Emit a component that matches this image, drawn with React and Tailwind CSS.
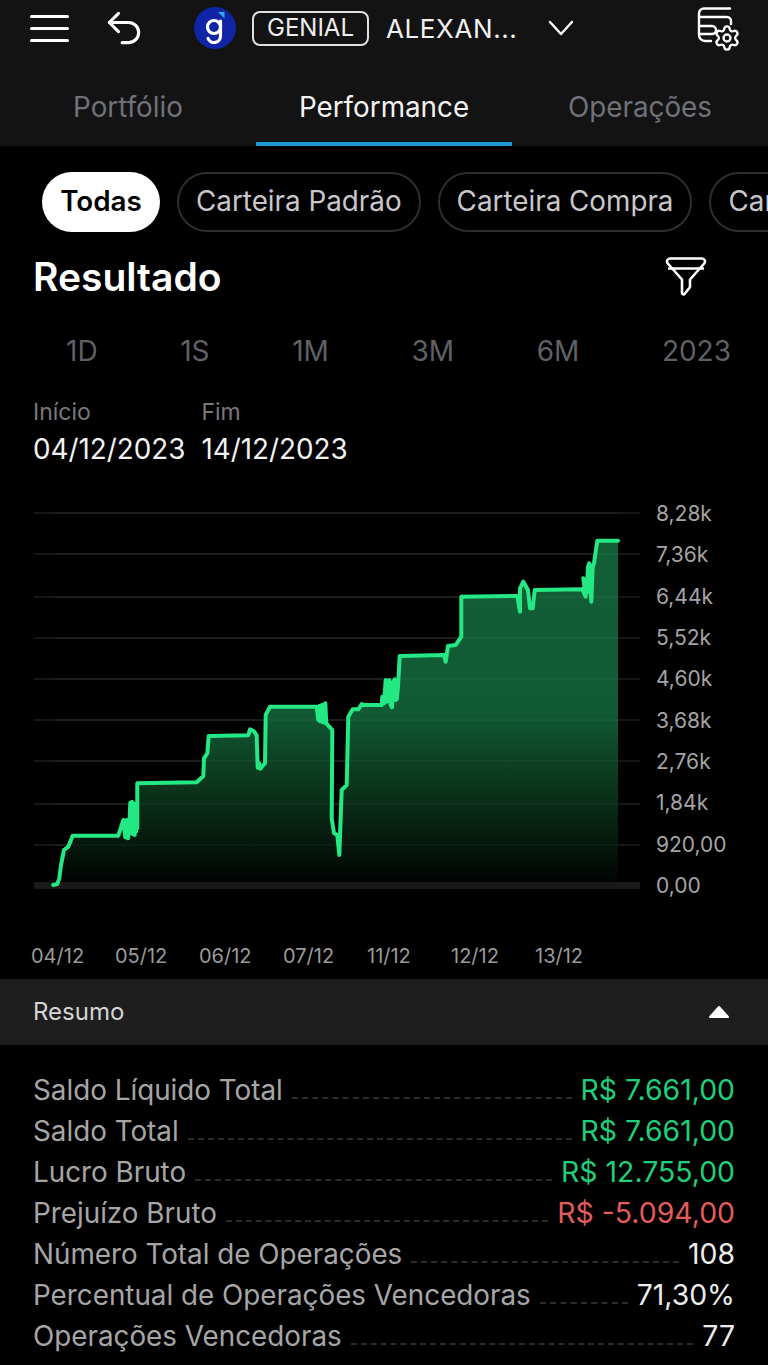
import { Settings, Undo2 } from 'lucide-react'

const FONT = 'font-["Inter",sans-serif]'

// pontos lidos do grafico, em coordenadas da pagina (svg comeca em y=500)
const pts1 = [
  [160,1155],[172,1152],[178,1135],[183,1095],[192,1050],[205,1040],[218,1007],[355,1007],[370,960],[376,1012],[380,960],[384,1015],
  [388,985],[391,908],[394,1000],[396,905],[399,1003],[401,910],[404,1005],[406,915],[408,995],[410,925],[412,985],[412,850],
  [590,847],[610,828],[612,775],[622,760],[626,708],
  [745,706],[750,688],[762,694],[770,706],[773,803],[778,790],[781,806],[795,790],[797,645],[810,620],[950,620],[955,660],
  [958,618],[961,664],[964,616],[967,666],[970,614],[973,668],[976,610],[979,670],
  [997,690],[995,955],[1002,1000],[1012,1005],[1018,1065],[1025,870],[1040,855],[1045,650],[1058,628],[1075,628],
  [1085,612],[1090,615],[1145,615],
].map(([x, y]) => [x / 3, y / 3])
const pts2 = [
  [-5,590],[0,610],[5,540],[9,605],[12,545],[16,540],[20,615],[24,622],[28,545],[32,538],[35,600],[38,598],[42,560],[47,468],
  [180,465],[185,485],[192,438],[215,435],[232,410],
  [232,290],[400,288],[408,335],[408,265],[418,245],[432,270],[438,325],[446,325],[452,270],[595,268],[605,290],[598,235],
  [608,280],[612,200],[616,190],[622,305],[626,200],[630,190],[640,122],[702,122],
].map(([x, y]) => [384 + x / 3, y / 3])
const pts = [...pts1, ...pts2]
const linePath = 'M' + pts.map(([x, y]) => `${x.toFixed(1)} ${y.toFixed(1)}`).join('L')
const areaPath = `${linePath}L618 382L54 382Z`

const gridY = [13, 54, 97, 138, 179, 220, 261, 304, 345]
const yLabels = ['8,28k', '7,36k', '6,44k', '5,52k', '4,60k', '3,68k', '2,76k', '1,84k', '920,00', '0,00']
const xLabels = ['04/12', '05/12', '06/12', '07/12', '11/12', '12/12', '13/12']
const periods = ['1D', '1S', '1M', '3M', '6M', '2023']

const GREEN = 'text-[#1fd07a]'
const resumo = [
  ['Saldo Líquido Total', 'R$ 7.661,00', GREEN],
  ['Saldo Total', 'R$ 7.661,00', GREEN],
  ['Lucro Bruto', 'R$ 12.755,00', GREEN],
  ['Prejuízo Bruto', 'R$ -5.094,00', 'text-[#e25c5c]'],
  ['Número Total de Operações', '108', 'text-[#ececec]'],
  ['Percentual de Operações Vencedoras', '71,30%', 'text-[#ececec]'],
  ['Operações Vencedoras', '77', 'text-[#ececec]'],
  ['Operações Perdedoras', '31', 'text-[#ececec]'],
]

const Grafico = () => (
  <svg width="640" height="400" viewBox="0 0 640 400" className="shrink-0">
    <defs>
      <linearGradient id="area" gradientUnits="userSpaceOnUse" x1="0" y1="40" x2="0" y2="382">
        <stop offset="0" stopColor="#125f37" />
        <stop offset="0.5" stopColor="#115a34" />
        <stop offset="0.75" stopColor="#0a3019" />
        <stop offset="1" stopColor="#010402" />
      </linearGradient>
    </defs>
    {gridY.map(y => (
      <line key={y} x1="34" x2="640" y1={y} y2={y} stroke="#161616" strokeWidth="2" />
    ))}
    <line x1="34" x2="640" y1="385.5" y2="385.5" stroke="#1a1a1a" strokeWidth="7" />
    <path d={areaPath} fill="url(#area)" />
    {gridY.map(y => (
      <line key={y} x1="54" x2="618" y1={y} y2={y} stroke="#fff" strokeOpacity="0.03" strokeWidth="2" />
    ))}
    <path d={linePath} fill="none" stroke="#24e884" strokeWidth="4" strokeLinejoin="round" strokeLinecap="round" />
  </svg>
)

const Logo = () => (
  <svg width="42" height="42" viewBox="0 0 42 42" fill="none" className="ml-[48px] shrink-0">
    <circle cx="21" cy="21" r="21" fill="#0f25a6" />
    <circle cx="20" cy="20" r="6.5" stroke="#fff" strokeWidth="3.2" />
    <path d="M26.5 14V29a6.5 6.5 0 0 1-12.5 2.5" stroke="#fff" strokeWidth="3.2" strokeLinecap="round" />
    <path d="M24 5h6.5v6.5z" fill="#2fa8e6" />
  </svg>
)

const IconeConfig = () => (
  <svg width="46" height="52" viewBox="0 0 46 52" fill="none" stroke="#fff" strokeWidth="2.4" strokeLinecap="round" className="ml-auto mr-[26px] shrink-0">
    <path d="M34 6.5H8a5 5 0 0 0-5 5V33a6 6 0 0 0 6 6h6" />
    <path d="M4 15H31a4 4 0 0 1 4 4v3" />
    <path d="M4 24h12a4 4 0 0 1 0 8H4" />
    <Settings x="17" y="22" width="28" height="28" strokeWidth="2" />
  </svg>
)

const IconeFiltro = () => (
  <svg width="42" height="42" viewBox="0 0 42 42" fill="none" stroke="#fff" strokeWidth="2.6" strokeLinejoin="round">
    <path d="M5 2.5H37a3 3 0 0 1 2.2 5L25 23.5V31l-5 6.5a1.6 1.6 0 0 1-3-1V23.5L2.8 7.5A3 3 0 0 1 5 2.5Z" />
    <path d="M3 12.5H39" />
  </svg>
)

export default function App() {
  return (
    <div className={`w-[768px] h-[1365px] overflow-hidden bg-black text-white ${FONT}`}>

      {/* TOPO */}
      <div className="bg-[#131313] h-[146px] flex flex-col">
        <div className="h-[56px] flex items-center">
          <div className="ml-[30px] w-[39px] flex flex-col gap-[9px]">
            <div className="h-[3px] rounded-full bg-white" />
            <div className="h-[3px] rounded-full bg-white" />
            <div className="h-[3px] rounded-full bg-white" />
          </div>
          <Undo2 size={44} strokeWidth={1.7} className="ml-[33px] text-white shrink-0" />
          <Logo />
          <div className="ml-[16px] w-[117px] h-[35px] rounded-[8px] border-2 border-[#e0e0e0] flex items-center justify-center text-[24px] text-[#eee]">
            GENIAL
          </div>
          <span className="ml-[17px] text-[26px] tracking-[0.6px] text-[#f2f2f2]">ALEXAN...</span>
          <svg width="26" height="16" viewBox="0 0 26 16" fill="none" stroke="#fff" strokeWidth="2.4" strokeLinecap="round" strokeLinejoin="round" className="ml-[31px] shrink-0">
            <path d="M2 2L13 14L24 2" />
          </svg>
          <IconeConfig />
        </div>
        <div className="flex-1 flex">
          <div className="w-[256px] pt-[18px] border-b-4 border-transparent flex items-center justify-center text-[27.8px] text-[#6f7279]">Portfólio</div>
          <div className="w-[256px] pt-[18px] border-b-4 border-[#1e9ad6] flex items-center justify-center text-[27.8px] text-[#f2f2f2]">Performance</div>
          <div className="w-[256px] pt-[18px] border-b-4 border-transparent flex items-center justify-center text-[27.8px] text-[#6f7279]">Operações</div>
        </div>
      </div>

      {/* FILTROS */}
      <div className="flex gap-[17px] pl-[42px] mt-[26px] h-[60px] overflow-hidden">
        <div className="w-[118px] rounded-full bg-white text-black font-semibold text-[27.8px] flex items-center justify-center shrink-0">Todas</div>
        {['Carteira Padrão', 'Carteira Compra', 'Carteira Venda'].map(c => (
          <div key={c} className="px-[17px] rounded-full border-2 border-[#2e2e2e] text-[#c8c8cc] text-[27.8px] flex items-center shrink-0">{c}</div>
        ))}
      </div>

      <div className="flex items-center justify-between pl-[33px] pr-[61px] mt-[23px]">
        <span className="text-[39px] font-semibold leading-[44px]">Resultado</span>
        <IconeFiltro />
      </div>

      {/* PERIODOS */}
      <div className="flex justify-between pl-[66px] pr-[37px] mt-[34px] text-[28px] leading-[36px] text-[#5f6166]">
        {periods.map(p => <span key={p}>{p}</span>)}
      </div>

      <div className="flex gap-[16px] pl-[33px] mt-[28px]">
        <div className="flex flex-col">
          <span className="text-[23px] text-[#77797e] leading-[30px]">Início</span>
          <span className="text-[27.8px] text-[#f2f2f2] leading-[44px]">04/12/2023</span>
        </div>
        <div className="flex flex-col">
          <span className="text-[23px] text-[#77797e] leading-[30px]">Fim</span>
          <span className="text-[27.8px] text-[#f2f2f2] leading-[44px]">14/12/2023</span>
        </div>
      </div>

      {/* GRAFICO */}
      <div className="flex mt-[29px] h-[400px]">
        <Grafico />
        <div className="ml-[16px] mt-[1px] h-[398px] flex flex-col justify-between text-[21px] leading-[26px] text-[#a4a4a4]">
          {yLabels.map(l => <span key={l}>{l}</span>)}
        </div>
      </div>

      <div className="flex pl-[31px] mt-[44px] text-[20px] leading-[24px] text-[#9a9a9a]">
        {xLabels.map(d => <span key={d} className="w-[84px]">{d}</span>)}
      </div>

      {/* RESUMO */}
      <div className="mt-[11px] h-[66px] bg-[#1e1e1e] flex items-center justify-between pl-[33px] pr-[38px]">
        <span className="text-[24px] text-[#d4d4d4]">Resumo</span>
        <svg width="22" height="14" viewBox="0 0 22 14" fill="#fff" stroke="#fff" strokeWidth="2" strokeLinejoin="round">
          <path d="M11 2L20 12H2Z" />
        </svg>
      </div>

      <div className="mt-[25px] pl-[33px] pr-[33px] flex flex-col">
        {resumo.map(([label, valor, cor]) => (
          <div key={label} className="flex items-center h-[41px] text-[27.8px] shrink-0">
            <span className="text-[#a6a6a6] whitespace-nowrap">{label}</span>
            <div className="flex-1 mx-[9px] mt-[14px] border-b-2 border-dashed border-[#2c2c2c]" />
            <span className={`${cor} text-[28.4px] whitespace-nowrap`}>{valor}</span>
          </div>
        ))}
      </div>
    </div>
  )
}
